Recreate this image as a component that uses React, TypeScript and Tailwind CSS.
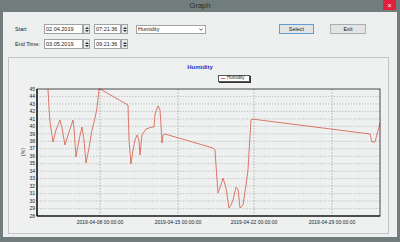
import React from "react";

const Y0 = 89;
const Y1 = 216;
const X0 = 37;
const X1 = 380;
const yOf = (v: number) => Y0 + ((45 - v) * (Y1 - Y0)) / 17;

const ticks = Array.from({ length: 18 }, (_, i) => 45 - i);
const xGrid = [
  { x: 100, label: "2019-04-08 00:00:00" },
  { x: 178, label: "2019-04-15 00:00:00" },
  { x: 254, label: "2019-04-22 00:00:00" },
  { x: 332, label: "2019-04-29 00:00:00" },
];

// humidity trace, page coordinates
const trace: [number, number][] = [
  [48, 89], [49, 108], [50, 122], [53, 142], [56, 130], [60, 120], [62, 128], [65, 145],
  [68, 135], [73, 120], [74, 128], [76, 157], [79, 140], [82, 127], [84, 140], [86, 163],
  [89, 148], [92, 130], [95, 118], [97, 108], [99, 89], [100, 89], [128, 105], [129, 140],
  [131, 164], [133, 150], [135, 140], [137, 135], [139, 140], [140, 155], [142, 135],
  [146, 129], [152, 127], [154, 127], [155, 114], [158, 106], [160, 110], [161, 125],
  [162, 143], [163, 135], [165, 134], [213, 148], [215, 150], [216, 165], [218, 193],
  [221, 185], [223, 178], [226, 188], [229, 208], [231, 205], [233, 200], [236, 187],
  [238, 189], [240, 208], [243, 205], [246, 185], [248, 170], [249, 152], [251, 120],
  [252, 119], [370, 134], [372, 142], [375, 142], [380, 123],
];

function Spin() {
  return (
    <div className="w-[7px] h-[10px] border border-[#9fa5a5] bg-[#e9ebeb] flex flex-col items-center justify-center gap-[1px]">
      <svg width="4" height="2" viewBox="0 0 4 2">
        <path d="M0 2 L2 0 L4 2 Z" fill="#333" />
      </svg>
      <svg width="4" height="2" viewBox="0 0 4 2">
        <path d="M0 0 L2 2 L4 0 Z" fill="#333" />
      </svg>
    </div>
  );
}

function Field({ value, w }: { value: string; w: string }) {
  return (
    <div className={`${w} h-[10px] border border-[#9fa5a5] bg-white pl-[1px] text-[5.5px] leading-[8px] text-[#222]`}>
      {value}
    </div>
  );
}

function Row({ label, date, time, extra }: { label: string; date: string; time: string; extra?: React.ReactNode }) {
  return (
    <div className="flex items-center h-[10px]">
      <div className="w-[29px] text-[5.5px] text-[#222]">{label}</div>
      <Field value={date} w="w-[39px]" />
      <Spin />
      <div className="w-[4px]" />
      <Field value={time} w="w-[27px]" />
      <Spin />
      {extra}
    </div>
  );
}

export default function App() {
  return (
    <div className="w-[400px] h-[242px] bg-[#717d7c] flex flex-col font-['Liberation_Sans',sans-serif]">
      <div className="h-[12px] relative flex items-center justify-center">
        <span className="text-[7.5px] text-[#263030] leading-none">Graph</span>
        <div className="absolute right-[4px] top-0 w-[13px] h-[10px] bg-[#e3213e] flex items-center justify-center text-white text-[7px] leading-none">
          ×
        </div>
      </div>
      <div className="mx-[3px] mb-[5px] flex-1 bg-[#edefee] flex flex-col">
        <div className="pl-[12px] pt-[12px] flex flex-col gap-[5px]">
          <Row
            label="Start"
            date="02.04.2019"
            time="07:21:36"
            extra={
              <>
                <div className="ml-[8px] w-[70px] h-[9px] border border-[#9fa5a5] bg-white flex items-center justify-between pl-[1px] pr-[2px] text-[5.5px] text-[#222]">
                  <span>Humidity</span>
                  <svg width="4" height="3" viewBox="0 0 4 3">
                    <path d="M0.3 0.5 L2 2.3 L3.7 0.5" stroke="#333" strokeWidth="0.8" fill="none" />
                  </svg>
                </div>
                <div className="ml-[73px] w-[35px] h-[10px] border border-[#5d9fd2] bg-[#e3e5e5] flex items-center justify-center text-[5.5px] text-[#222]">
                  Select
                </div>
                <div className="ml-[16px] w-[36px] h-[10px] border border-[#a9aeae] bg-[#e3e5e5] flex items-center justify-center text-[5.5px] text-[#222]">
                  Exit
                </div>
              </>
            }
          />
          <Row label="End Time:" date="03.05.2019" time="09:21:36" />
        </div>
        <div className="ml-[5px] mr-[8px] mt-[8px] mb-[3px] flex-1 border border-[#c1c6c5] bg-[#eff1f0] flex flex-col">
          <div className="h-[28px] flex flex-col pt-[6px]">
            <div className="h-[6px] pl-[3px] text-center text-[6px] leading-[6px] font-bold text-[#2436b8]">Humidity</div>
            <div className="mt-[5px] ml-[209px] w-[32px] h-[7px] border border-[#555] bg-white shadow-[1px_1px_0_#333] flex items-center gap-[2px] px-[2px]">
              <div className="w-[4px] h-[1px] bg-[#d9695a]" />
              <span className="text-[4.5px] leading-none text-[#222]">Humidity</span>
            </div>
          </div>
          <svg width="379" height="147" viewBox="0 0 379 147" className="block">
            <g transform="translate(-9 -86)">
              {ticks.slice(1, 17).map((v) => (
                <line key={v} x1={X0} x2={X1} y1={yOf(v)} y2={yOf(v)} stroke="#9a9d9d" strokeWidth="0.6" strokeDasharray="1.2 1.6" />
              ))}
              {xGrid.map((g) => (
                <line key={g.x} x1={g.x} x2={g.x} y1={Y0} y2={Y1} stroke="#8a8d8d" strokeWidth="0.6" strokeDasharray="1.5 1.5" />
              ))}
              <polyline
                points={trace.map((p) => p.join(",")).join(" ")}
                fill="none"
                stroke="#d9695a"
                strokeWidth="0.9"
                strokeLinejoin="round"
              />
              <rect x={X0} y={Y0} width={X1 - X0} height={Y1 - Y0} fill="none" stroke="#222" strokeWidth="0.8" />
              <line x1={X0} x2={X0} y1={Y0} y2={Y1} stroke="#000" strokeWidth="1.2" />
              <line x1={X0} x2={X1} y1={Y1} y2={Y1} stroke="#000" strokeWidth="1.2" />
              {ticks.map((v) => (
                <text key={v} x={35} y={yOf(v) + 1.7} fontSize="5" textAnchor="end" fill="#222" fontFamily="Liberation Sans, sans-serif">
                  {v}
                </text>
              ))}
              <text
                x={25}
                y={152}
                fontSize="5"
                textAnchor="middle"
                fill="#222"
                fontFamily="Liberation Sans, sans-serif"
                transform="rotate(-90 25 152)"
              >
                (%)
              </text>
              {xGrid.map((g) => (
                <text key={g.label} x={g.x} y={224} fontSize="5" textAnchor="middle" fill="#222" fontFamily="Liberation Sans, sans-serif">
                  {g.label}
                </text>
              ))}
            </g>
          </svg>
        </div>
      </div>
    </div>
  );
}
